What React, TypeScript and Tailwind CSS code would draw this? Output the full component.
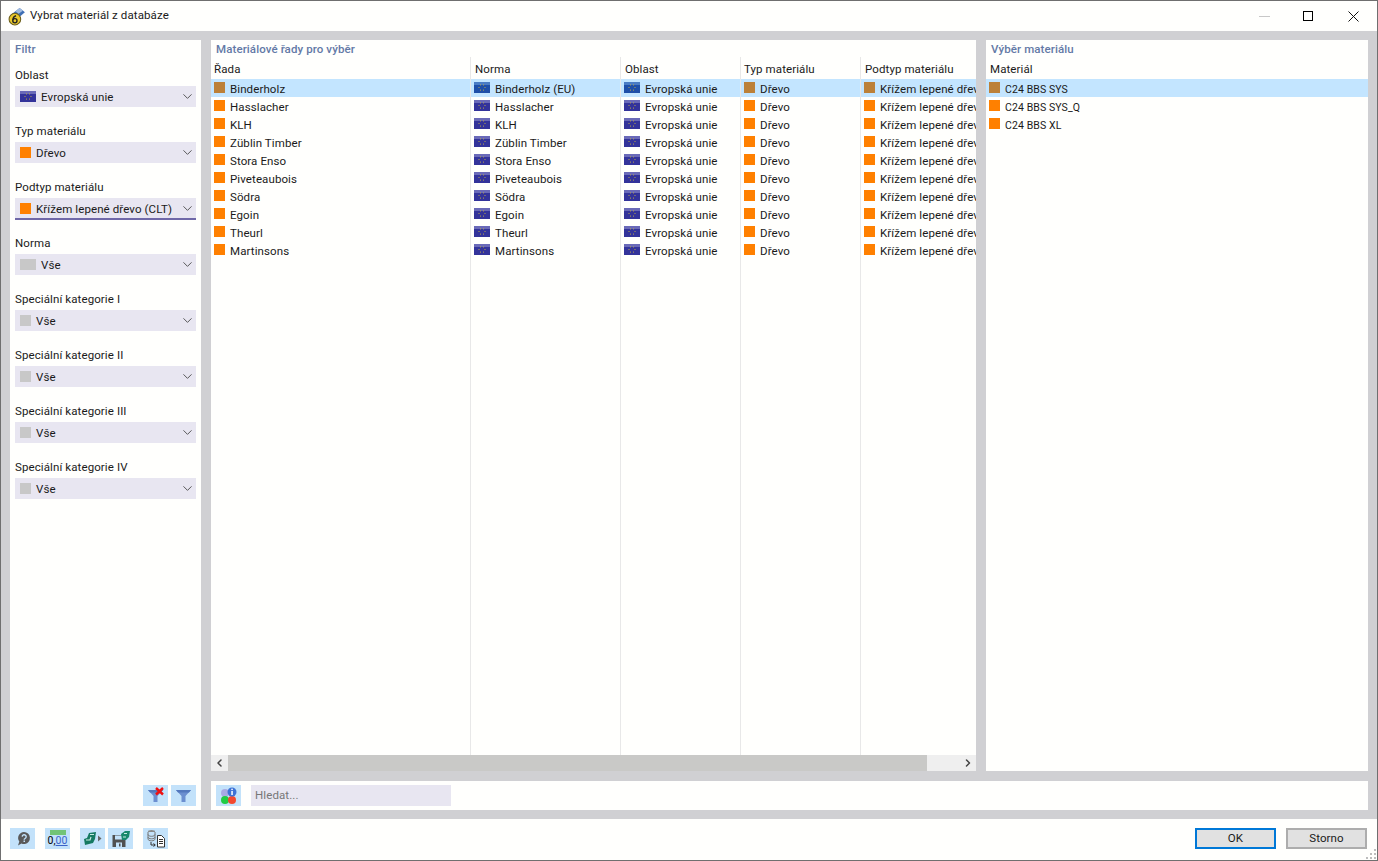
import { ChevronDown, ChevronLeft, ChevronRight } from "lucide-react"

const rows = [
  ["Binderholz", "Binderholz (EU)"],
  ["Hasslacher", "Hasslacher"],
  ["KLH", "KLH"],
  ["Züblin Timber", "Züblin Timber"],
  ["Stora Enso", "Stora Enso"],
  ["Piveteaubois", "Piveteaubois"],
  ["Södra", "Södra"],
  ["Egoin", "Egoin"],
  ["Theurl", "Theurl"],
  ["Martinsons", "Martinsons"],
]

const filters = [
  { label: "Oblast", value: "Evropská unie", icon: "flag" },
  { label: "Typ materiálu", value: "Dřevo", icon: "orange" },
  { label: "Podtyp materiálu", value: "Křížem lepené dřevo (CLT)", icon: "orange", active: true },
  { label: "Norma", value: "Vše", icon: "gray" },
  { label: "Speciální kategorie I", value: "Vše", icon: "gray-sm" },
  { label: "Speciální kategorie II", value: "Vše", icon: "gray-sm" },
  { label: "Speciální kategorie III", value: "Vše", icon: "gray-sm" },
  { label: "Speciální kategorie IV", value: "Vše", icon: "gray-sm" },
]

function Flag({ selected = false }: { selected?: boolean }) {
  const stars = [0, 60, 120, 180, 240, 300]
  return (
    <svg width="16" height="11" viewBox="0 0 16 11" className="shrink-0">
      <rect width="16" height="11" fill={selected ? "#1f4fa8" : "#33339a"} />
      <rect width="16" height="3" fill={selected ? "#4a7cc4" : "#6a6ab8"} />
      {stars.map((a) => (
        <rect
          key={a}
          x={8 + 3 * Math.cos((a * Math.PI) / 180) - 0.5}
          y={5.5 + 3 * Math.sin((a * Math.PI) / 180) - 0.5}
          width="1"
          height="1"
          fill="#b9a64a"
        />
      ))}
    </svg>
  )
}

function Swatch({ color }: { color: string }) {
  return <span className="h-[11px] w-[11px] shrink-0" style={{ backgroundColor: color }} />
}

function Cell({ width, pl, selected, icon, children }: { width: string; pl: string; selected: boolean; icon: "flag" | "wood"; children: string }) {
  return (
    <div className={`flex h-[18px] shrink-0 items-start pt-[3px] ${width} ${pl} overflow-hidden whitespace-nowrap`}>
      {icon === "flag" ? <Flag selected={selected} /> : <Swatch color={selected ? "#bc8038" : "#ff8000"} />}
      <span className="ml-[5px] leading-[14px]">{children}</span>
    </div>
  )
}

function IconButton({ children }: { children: React.ReactNode }) {
  return <div className="flex h-[21px] w-[25px] shrink-0 items-center justify-center bg-[#c3e2fa]">{children}</div>
}

function FunnelIcon({ cross = false }: { cross?: boolean }) {
  return (
    <svg width="21" height="17" viewBox="0 0 21 17">
      <path d="M3 3h15l-5.500 6v6h-4V9z" fill="#6c8fd0" />
      <path d="M3 3h15l-2 2.400H5z" fill="#5378bd" />
      {cross && <path d="M11 1l7 6.500M18 1l-7 6.500" stroke="#f01010" strokeWidth="2.400" />}
    </svg>
  )
}

function Header({ width, pl, children }: { width: string; pl: string; children: string }) {
  return <div className={`shrink-0 ${width} ${pl} whitespace-nowrap`}>{children}</div>
}

export default function App() {
  return (
    <div className="relative flex h-[861px] w-[1378px] flex-col overflow-hidden border border-[#6f6f6f] bg-[#fffffd] font-['Roboto',sans-serif] text-[11.5px] tracking-[0.1px] text-[#1a1a1a]">
      {/* title bar */}
      <div className="flex h-[30px] shrink-0 items-center bg-[#fffffd] pl-[7px]">
        <svg width="18" height="19" viewBox="0 0 17 18" className="shrink-0">
          <path d="M3 7l8-6 5 4-7 6z" fill="#3f6fb5" />
          <path d="M7 4l4-3 3 2.500-4 3z" fill="#a3bde0" />
          <circle cx="6.500" cy="11.500" r="5.500" fill="#e9c92e" stroke="#6d5f1c" />
          <circle cx="6.500" cy="13" r="2" fill="none" stroke="#222" strokeWidth="1.300" />
          <path d="M4.600 12.500c0-2.200 1-3.600 3-4.200" fill="none" stroke="#222" strokeWidth="1.300" />
        </svg>
        <span className="ml-[4px]">Vybrat materiál z databáze</span>
        <div className="ml-auto flex items-center">
          <span className="h-px w-[11px] bg-[#c8c8c8]" />
          <span className="ml-[33px] h-[10px] w-[10px] border border-black" />
          <svg width="11" height="11" viewBox="0 0 11 11" className="ml-[35px] mr-[18px]">
            <path d="M.5.500l10 10M10.500.500l-10 10" stroke="#111" strokeWidth="1" />
          </svg>
        </div>
      </div>

      {/* body */}
      <div className="flex h-[788px] shrink-0 gap-[10px] bg-[#d0d0d3] p-[9px]">
        <div className="flex w-[191px] shrink-0 flex-col bg-[#fffffd] px-[5px]">
          <div className="mt-[2px] h-[15px] font-medium leading-[15px] text-[#6379a6]">Filtr</div>
          <div className="mt-[9px] flex flex-col gap-[15px]">
            {filters.map((f) => (
              <div key={f.label} className="flex h-[41px] flex-col">
                <div className="h-[20px] shrink-0 pt-px leading-[17px]">{f.label}</div>
                <div className={`flex shrink-0 items-center bg-[#e8e6f1] pl-[5px] ${f.active ? "h-[22px] border-b-2 border-[#6f68a8] pt-px" : "h-[21px]"}`}>
                  {f.icon === "flag" && <Flag />}
                  {f.icon === "orange" && <Swatch color="#ff8000" />}
                  {f.icon === "gray" && <span className="h-[11px] w-[16px] bg-[#c8c8c8]" />}
                  {f.icon === "gray-sm" && <span className="h-[11px] w-[11px] bg-[#c8c8c8]" />}
                  <span className="ml-[5px] pt-[2px]">{f.value}</span>
                  <ChevronDown size={15} strokeWidth={1.4} className="ml-auto mr-[1px] text-[#444]" />
                </div>
              </div>
            ))}
          </div>
          <div className="mb-[4px] mt-auto flex justify-end gap-[3px]">
            <IconButton><FunnelIcon cross /></IconButton>
            <IconButton><FunnelIcon /></IconButton>
          </div>
        </div>

        <div className="flex min-w-0 flex-1 flex-col gap-[10px]">
          <div className="flex h-[731px] shrink-0 gap-[10px]">
            {/* series table */}
            <div className="flex w-[765px] shrink-0 flex-col bg-[#fffffd]">
              <div className="mt-[2px] h-[15px] shrink-0 pl-[5px] font-medium leading-[15px] text-[#6379a6]">Materiálové řady pro výběr</div>
              <div className="relative min-h-0 flex-1 overflow-hidden">
                <div className="flex h-[22px] items-center pt-[4px]">
                  <Header width="w-[259px]" pl="pl-[3px]">Řada</Header>
                  <Header width="w-[150px]" pl="pl-[5px]">Norma</Header>
                  <Header width="w-[120px]" pl="pl-[5px]">Oblast</Header>
                  <Header width="w-[120px]" pl="pl-[4px]">Typ materiálu</Header>
                  <Header width="w-[116px]" pl="pl-[5px]">Podtyp materiálu</Header>
                </div>
                {rows.map((r, i) => (
                  <div key={r[0]} className={`flex h-[18px] ${i === 0 ? "bg-[#c3e5ff]" : ""}`}>
                    <Cell width="w-[259px]" pl="pl-[3px]" selected={i === 0} icon="wood">{r[0]}</Cell>
                    <Cell width="w-[150px]" pl="pl-[4px]" selected={i === 0} icon="flag">{r[1]}</Cell>
                    <Cell width="w-[120px]" pl="pl-[4px]" selected={i === 0} icon="flag">Evropská unie</Cell>
                    <Cell width="w-[120px]" pl="pl-[4px]" selected={i === 0} icon="wood">Dřevo</Cell>
                    <Cell width="w-[116px]" pl="pl-[4px]" selected={i === 0} icon="wood">Křížem lepené dřevo (CLT)</Cell>
                  </div>
                ))}
                {/* column dividers */}
                <div className="absolute bottom-0 left-[259px] top-0 w-px bg-[#e8e8e8]" />
                <div className="absolute bottom-0 left-[409px] top-0 w-px bg-[#e8e8e8]" />
                <div className="absolute bottom-0 left-[529px] top-0 w-px bg-[#e8e8e8]" />
                <div className="absolute bottom-0 left-[649px] top-0 w-px bg-[#e8e8e8]" />
              </div>
              <div className="flex h-[16px] shrink-0 items-center bg-[#efefef]">
                <ChevronLeft size={12} strokeWidth={3} className="ml-[2px] w-[13px] text-[#444]" />
                <div className="ml-[2px] h-full w-[699px] bg-[#c9c9c7]" />
                <ChevronRight size={12} strokeWidth={3} className="ml-auto mr-[2px] text-[#444]" />
              </div>
            </div>

            {/* selection list */}
            <div className="flex min-w-0 flex-1 flex-col bg-[#fffffd]">
              <div className="mt-[2px] h-[15px] pl-[5px] font-medium leading-[15px] text-[#6379a6]">Výběr materiálu</div>
              <div className="flex h-[22px] items-center pl-[4px] pt-[4px]">Materiál</div>
              {["C24 BBS SYS", "C24 BBS SYS_Q", "C24 BBS XL"].map((m, i) => (
                <div key={m} className={`flex h-[18px] items-start pl-[3px] pt-[3px] ${i === 0 ? "bg-[#c3e5ff]" : ""}`}>
                  <Swatch color={i === 0 ? "#bc8038" : "#ff8000"} />
                  <span className="ml-[5px] text-[10.500px] leading-[15px]">{m}</span>
                </div>
              ))}
            </div>
          </div>

          {/* search */}
          <div className="flex h-[29px] shrink-0 items-center bg-[#fffffd] pl-[5px]">
            <IconButton>
              <svg width="21" height="19" viewBox="0 0 21 19">
                <circle cx="7" cy="7" r="4" fill="#a9a9e4" />
                <circle cx="7" cy="14" r="4" fill="#22cc44" />
                <circle cx="14" cy="14" r="4" fill="#f2492f" />
                <circle cx="14" cy="6" r="4.500" fill="#3d72d6" />
                <rect x="13.300" y="5" width="1.500" height="4" fill="#fff" />
                <rect x="13.300" y="2.700" width="1.500" height="1.400" fill="#fff" />
              </svg>
            </IconButton>
            <div className="ml-[10px] flex h-[21px] w-[200px] items-center bg-[#e8e6f1] pl-[4px] pt-px text-[#777]">Hledat...</div>
          </div>
        </div>
      </div>

      {/* footer */}
      <div className="flex min-h-0 flex-1 items-start bg-[#fffffd] pl-[9px] pt-[9px]">
        <IconButton>
          <svg width="18" height="17" viewBox="0 0 18 17">
            <path d="M10 2a6 6 0 0 1 1 11.900c-1.500.300-2.500 0-3.500-.5L4 15.500l1.300-4A6 6 0 0 1 10 2z" fill="#595959" />
            <path d="M8.200 6.600a2 2 0 1 1 2.900 1.900c-.6.300-.9.700-.9 1.300" fill="none" stroke="#c3e2fa" strokeWidth="1.400" />
            <rect x="9.500" y="10.500" width="1.500" height="1.500" fill="#c3e2fa" />
          </svg>
        </IconButton>
        <div className="ml-[10px]">
          <IconButton>
            <div className="flex flex-col items-center leading-none">
              <span className="h-[5px] w-[16px] bg-[#72c476]" />
              <span className="text-[10.500px] leading-[12px] text-black">0,<span className="text-[#3a62c8] underline">00</span></span>
            </div>
          </IconButton>
        </div>
        <div className="ml-[10px]">
          <IconButton>
            <svg width="20" height="15" viewBox="0 0 20 15">
              <path d="M1 8l3-1 2-5 7-1-1 7-2 4-8 2z" fill="#157a62" />
              <path d="M3 9h4l1-3M7 3.500h4" fill="none" stroke="#c6ece2" strokeWidth="1.200" />
              <path d="M15 4.500l3.500 3-3.500 3z" fill="#666" />
            </svg>
          </IconButton>
        </div>
        <div className="ml-[3px]">
          <IconButton>
            <svg width="20" height="18" viewBox="0 0 20 18">
              <path d="M1.500 5h11l2 2v10h-13z" fill="#505050" />
              <rect x="4" y="5.500" width="7" height="4" fill="#c3e2fa" />
              <rect x="5" y="12.500" width="6" height="4.500" fill="#c3e2fa" />
              <rect x="8" y="13.500" width="1.500" height="3" fill="#505050" />
              <path d="M10 4l4-3h5l-1 6-3 3h-4z" fill="#17886e" />
              <path d="M13 3.500h3M12 7h3" stroke="#c6ece2" />
            </svg>
          </IconButton>
        </div>
        <div className="ml-[10px]">
          <IconButton>
            <svg width="21" height="19" viewBox="0 0 21 19">
              <ellipse cx="6.500" cy="2.500" rx="3.500" ry="1.500" fill="#8a8a8a" />
              <path d="M3 3v7c0 1 1.500 1.800 3.500 1.800S10 11 10 10V3" fill="#c3e2fa" stroke="#777" />
              <path d="M3 5.500c0 1 1.500 1.800 3.500 1.800S10 6.500 10 5.500M3 8c0 1 1.500 1.800 3.500 1.800S10 9 10 8" fill="none" stroke="#777" />
              <path d="M12.500 6.500h4l3 3v8.500h-7z" fill="#fff" stroke="#333" />
              <path d="M14 10.500h4M14 12.500h4M14 14.500h4" stroke="#333" />
              <path d="M6 13v3h4M8.500 14.500l1.800 1.500-1.800 1.500" fill="none" stroke="#333" />
            </svg>
          </IconButton>
        </div>
        <div className="ml-auto mr-[10px] flex gap-[10px]">
          <button className="h-[21px] w-[81px] border-2 border-[#0078d7] bg-[#e1e1e1] pt-px leading-none">OK</button>
          <button className="h-[21px] w-[81px] border-2 border-[#adadad] bg-[#e1e1e1] pt-px leading-none">Storno</button>
        </div>
      </div>
      <svg width="11" height="11" viewBox="0 0 11 11" className="absolute bottom-0 right-0">
        {[[8, 0], [4, 4], [8, 4], [0, 8], [4, 8], [8, 8]].map(([x, y]) => (
          <rect key={`${x}-${y}`} x={x} y={y} width="2" height="2" fill="#bdbdbd" />
        ))}
      </svg>
    </div>
  )
}
